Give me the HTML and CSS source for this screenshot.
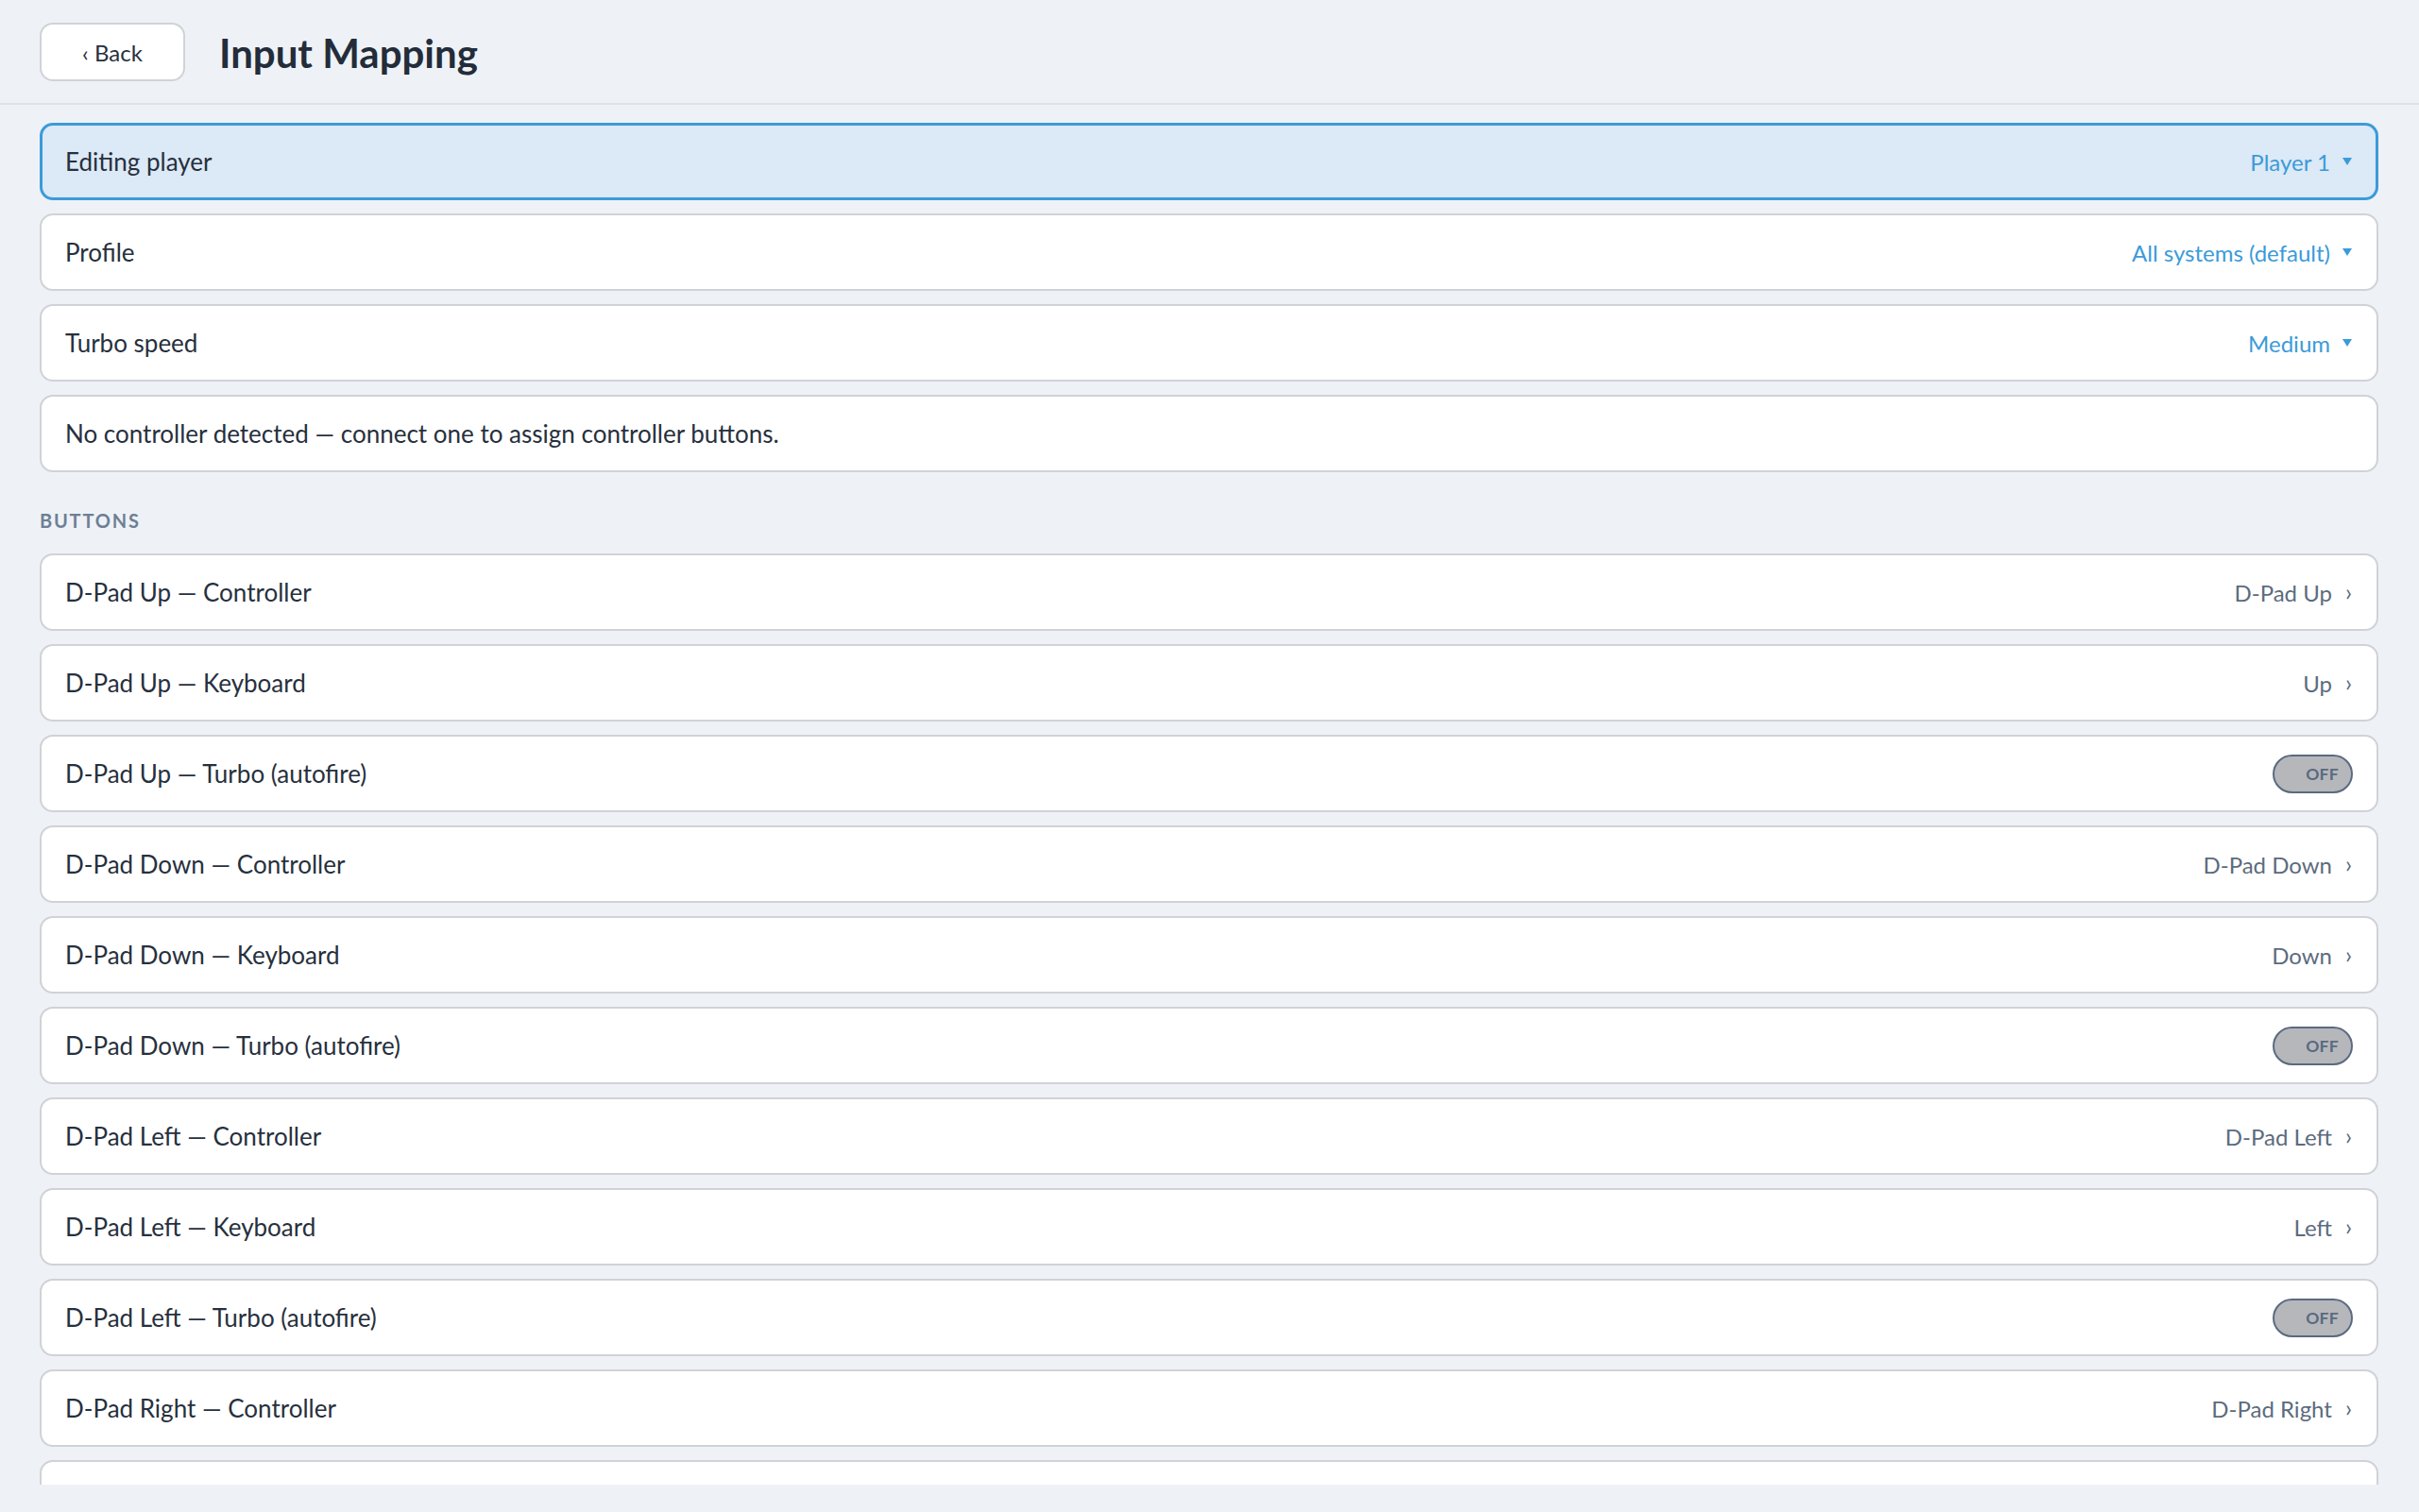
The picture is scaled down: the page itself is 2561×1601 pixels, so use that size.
FILE: index.html
```html
<!DOCTYPE html>
<html lang="en">
<head>
<meta charset="utf-8">
<title>Input Mapping</title>
<link rel="stylesheet" href="styles.css">
</head>
<body>
<div class="app">
  <header class="topbar">
    <button class="back-btn">‹ Back</button>
    <h1 class="title">Input Mapping</h1>
  </header>
  <main class="content">
    <div class="row row-active">
      <span class="label">Editing player</span>
      <span class="select">Player 1<svg class="caret" viewBox="0 0 10 8" width="10" height="8"><path d="M0 0H10L5 8Z"/></svg></span>
    </div>
    <div class="row">
      <span class="label">Profile</span>
      <span class="select">All systems (default)<svg class="caret" viewBox="0 0 10 8" width="10" height="8"><path d="M0 0H10L5 8Z"/></svg></span>
    </div>
    <div class="row">
      <span class="label">Turbo speed</span>
      <span class="select">Medium<svg class="caret" viewBox="0 0 10 8" width="10" height="8"><path d="M0 0H10L5 8Z"/></svg></span>
    </div>
    <div class="row">
      <span class="label">No controller detected — connect one to assign controller buttons.</span>
    </div>

    <h2 class="section">BUTTONS</h2>

    <div class="row"><span class="label">D-Pad Up — Controller</span><span class="value">D-Pad Up<span class="chev">›</span></span></div>
    <div class="row"><span class="label">D-Pad Up — Keyboard</span><span class="value">Up<span class="chev">›</span></span></div>
    <div class="row"><span class="label">D-Pad Up — Turbo (autofire)</span><span class="toggle"><span class="toggle-text">OFF</span></span></div>
    <div class="row"><span class="label">D-Pad Down — Controller</span><span class="value">D-Pad Down<span class="chev">›</span></span></div>
    <div class="row"><span class="label">D-Pad Down — Keyboard</span><span class="value">Down<span class="chev">›</span></span></div>
    <div class="row"><span class="label">D-Pad Down — Turbo (autofire)</span><span class="toggle"><span class="toggle-text">OFF</span></span></div>
    <div class="row"><span class="label">D-Pad Left — Controller</span><span class="value">D-Pad Left<span class="chev">›</span></span></div>
    <div class="row"><span class="label">D-Pad Left — Keyboard</span><span class="value">Left<span class="chev">›</span></span></div>
    <div class="row"><span class="label">D-Pad Left — Turbo (autofire)</span><span class="toggle"><span class="toggle-text">OFF</span></span></div>
    <div class="row"><span class="label">D-Pad Right — Controller</span><span class="value">D-Pad Right<span class="chev">›</span></span></div>
    <div class="row row-stub"></div>
  </main>
</div>
</body>
</html>
```
FILE: styles.css
```css
* { box-sizing: border-box; }
html, body { margin: 0; padding: 0; }
body {
  background: #eef2f6;
  font-family: Lato, "Open Sans", sans-serif;
  color: #27303d;
  height: 100vh;
  overflow: hidden;
}
.app {
  display: flex;
  flex-direction: column;
  height: 100vh;
  padding-bottom: 29px;
}
.topbar {
  flex: 0 0 111px;
  display: flex;
  align-items: center;
  gap: 36px;
  padding: 0 42px;
  border-bottom: 2px solid #dde2e8;
}
.back-btn {
  width: 154px;
  height: 62px;
  background: #ffffff;
  border: 2px solid #cfd3d8;
  border-radius: 14px;
  font-family: Lato, sans-serif;
  font-size: 24px;
  color: #27303d;
  padding: 0;
  margin-top: 1px;
}
.title {
  margin: 4px 0 0;
  font-size: 42px;
  font-weight: 700;
  color: #232c3a;
  line-height: 1.2;
}
.content {
  flex: 1;
  min-height: 0;
  overflow: hidden;
  display: flex;
  flex-direction: column;
  gap: 14px;
  padding: 19px 43px 0 42px;
}
.row {
  flex: 0 0 82px;
  height: 82px;
  display: flex;
  align-items: center;
  justify-content: space-between;
  background: #ffffff;
  border: 2px solid #cfd2d6;
  border-radius: 14px;
  padding: 0 26px 0 25px;
  font-size: 26px;
}
.row-active {
  background: #dce9f6;
  border: 3px solid #3b9bd9;
  padding: 0 25px 0 24px;
}
.label { white-space: nowrap; }
.select {
  display: flex;
  align-items: center;
  gap: 13px;
  color: #3b9bd9;
  font-size: 24px;
}
.caret { fill: #3b9bd9; margin-top: -1px; }
.value {
  display: flex;
  align-items: center;
  gap: 14px;
  color: #5c6b7e;
  font-size: 24px;
}
.chev { font-size: 25px; position: relative; top: -1px; }
.section {
  margin: 25px 0 9px;
  font-size: 20px;
  line-height: 24px;
  font-weight: 700;
  letter-spacing: 1.8px;
  color: #6e7f96;
}
.toggle {
  width: 85px;
  height: 41px;
  border: 2px solid #5a6a80;
  border-radius: 21px;
  background: #b6b7ba;
  display: flex;
  align-items: center;
  justify-content: flex-end;
  padding-right: 13px;
  margin-right: -1px;
}
.toggle-text {
  font-size: 17.5px;
  font-weight: 700;
  color: #5a6a80;
  letter-spacing: 0.3px;
}
```
